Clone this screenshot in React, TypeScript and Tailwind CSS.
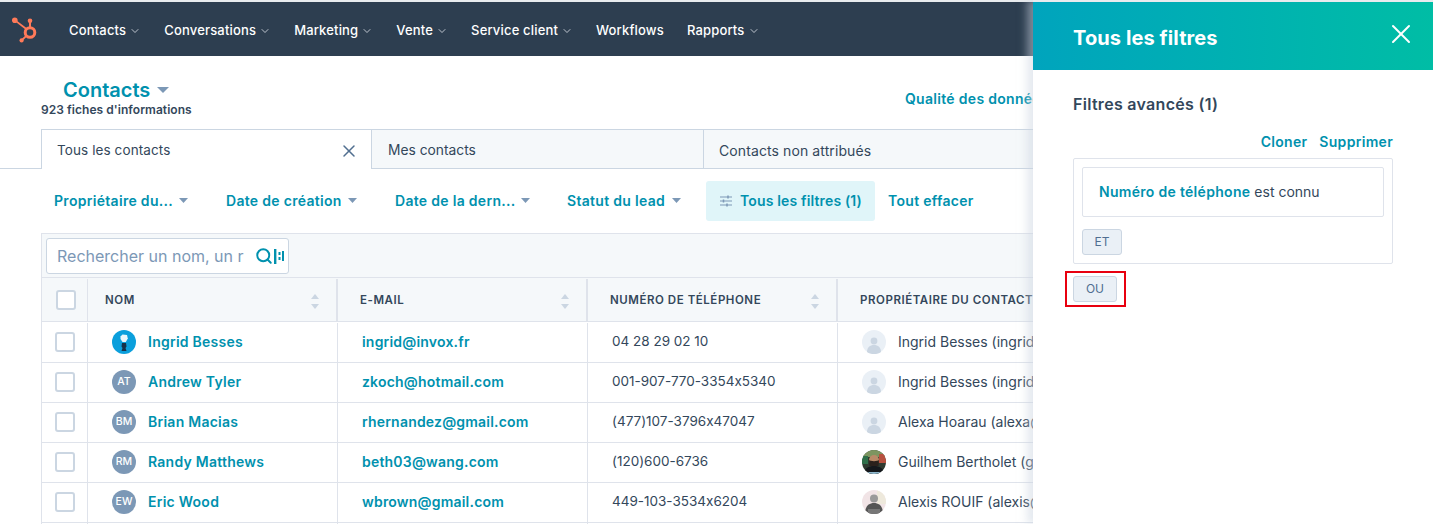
import { ChevronDown, Search, X } from 'lucide-react';

const navItems = [
  { label: 'Contacts', menu: true },
  { label: 'Conversations', menu: true },
  { label: 'Marketing', menu: true },
  { label: 'Vente', menu: true },
  { label: 'Service client', menu: true },
  { label: 'Workflows', menu: false },
  { label: 'Rapports', menu: true },
];

const filters = [
  { label: 'Propriétaire du...', width: 'w-[172px]', gap: 'gap-[6px]' },
  { label: 'Date de création', width: 'w-[169px]', gap: 'gap-[6px]' },
  { label: 'Date de la dern...', width: 'w-[172px]', gap: 'gap-[5px]' },
  { label: 'Statut du lead', width: 'w-[139px]', gap: 'gap-[7px]' },
];

type Owner = 'blank' | 'guilhem' | 'alexis';

const rows: {
  initials: string;
  name: string;
  email: string;
  phone: string;
  owner: string;
  ownerAvatar: Owner;
}[] = [
  { initials: '', name: 'Ingrid Besses', email: 'ingrid@invox.fr', phone: '04 28 29 02 10', owner: 'Ingrid Besses (ingrid@invox.fr)', ownerAvatar: 'blank' },
  { initials: 'AT', name: 'Andrew Tyler', email: 'zkoch@hotmail.com', phone: '001-907-770-3354x5340', owner: 'Ingrid Besses (ingrid@invox.fr)', ownerAvatar: 'blank' },
  { initials: 'BM', name: 'Brian Macias', email: 'rhernandez@gmail.com', phone: '(477)107-3796x47047', owner: 'Alexa Hoarau (alexa@invox.fr)', ownerAvatar: 'blank' },
  { initials: 'RM', name: 'Randy Matthews', email: 'beth03@wang.com', phone: '(120)600-6736', owner: 'Guilhem Bertholet (guilhem@invox.fr)', ownerAvatar: 'guilhem' },
  { initials: 'EW', name: 'Eric Wood', email: 'wbrown@gmail.com', phone: '449-103-3534x6204', owner: 'Alexis ROUIF (alexis@invox.fr)', ownerAvatar: 'alexis' },
];

function Logo() {
  return (
    <svg width="28" height="30" viewBox="0 0 28 30" fill="none" className="shrink-0">
      <circle cx="18" cy="18.5" r="4.8" stroke="#ff7a59" strokeWidth="3" />
      <circle cx="18" cy="6.8" r="2.3" fill="#ff7a59" />
      <path d="M18 7v7" stroke="#ff7a59" strokeWidth="2" />
      <circle cx="2.8" cy="6.2" r="2.8" fill="#ff7a59" />
      <path d="M3 6.4l11 8.4" stroke="#ff7a59" strokeWidth="1.8" />
      <circle cx="9.6" cy="26.4" r="2.1" fill="#ff7a59" />
      <path d="M10 26l4.6-4.4" stroke="#ff7a59" strokeWidth="1.8" />
    </svg>
  );
}

function Caret() {
  return (
    <svg width="9" height="5" viewBox="0 0 9 5" className="shrink-0">
      <path d="M0 0h9L4.5 5z" fill="#7c98b6" />
    </svg>
  );
}

function SortArrows() {
  return (
    <svg width="8" height="15" viewBox="0 0 8 15" className="shrink-0">
      <path d="M4 0l4 5H0z" fill="#cbd6e2" />
      <path d="M4 15l4-5H0z" fill="#cbd6e2" />
    </svg>
  );
}

function BlankAvatar() {
  return (
    <svg width="24" height="24" viewBox="0 0 24 24" className="shrink-0">
      <circle cx="12" cy="12" r="12" fill="#eaf0f6" />
      <circle cx="12" cy="11" r="3.4" fill="#cbd6e2" />
      <path d="M5 22c0-4.5 3-7 7-7s7 2.5 7 7c-2 1.400-4.500 2-7 2s-5-.6-7-2z" fill="#cbd6e2" />
    </svg>
  );
}

function GuilhemAvatar() {
  return (
    <svg width="24" height="24" viewBox="0 0 24 24" className="shrink-0">
      <clipPath id="guilhem">
        <circle cx="12" cy="12" r="12" />
      </clipPath>
      <g clipPath="url(#guilhem)">
        <rect width="24" height="24" fill="#2f3a30" />
        <rect width="24" height="7" fill="#7d9560" />
        <rect x="17" y="4" width="7" height="9" fill="#b8503f" />
        <rect x="0" y="6" width="6" height="8" fill="#2f6f4a" />
        <circle cx="12" cy="10" r="5" fill="#b98a68" />
        <path d="M7 10c1 1.500 9 1.500 10 0l-.5 6h-9z" fill="#2b211c" />
        <path d="M2 24c0-6 5-8 10-8s10 2 10 8z" fill="#15181c" />
        <rect y="22" width="24" height="2" fill="#8fb7cc" />
      </g>
    </svg>
  );
}

function AlexisAvatar() {
  return (
    <svg width="24" height="24" viewBox="0 0 24 24" className="shrink-0">
      <clipPath id="alexis">
        <circle cx="12" cy="12" r="12" />
      </clipPath>
      <g clipPath="url(#alexis)">
        <rect width="24" height="24" fill="#f1e4e6" />
        <rect x="15" width="9" height="14" fill="#eee9dc" />
        <circle cx="12" cy="8.500" r="4" fill="#9a9a9a" />
        <path d="M3 24c0-8 4-11 9-11s9 3 9 11z" fill="#555555" />
        <rect x="6" y="19" width="12" height="5" fill="#777777" />
      </g>
    </svg>
  );
}

function InvoxAvatar() {
  return (
    <svg width="24" height="24" viewBox="0 0 24 24" className="shrink-0">
      <circle cx="12" cy="12" r="12" fill="#0b9fdc" />
      <path d="M8.500 6.500l2-2 4.500.5.800 3.500-2 3.500h-3.300L8.500 9z" fill="#eaf6fb" />
      <path d="M10 13h4l.5 3.500-1 1.500 1 3h-5l1-3-1-1.500z" fill="#17324a" />
    </svg>
  );
}

function OwnerAvatar({ kind }: { kind: Owner }) {
  if (kind === 'guilhem') return <GuilhemAvatar />;
  if (kind === 'alexis') return <AlexisAvatar />;
  return <BlankAvatar />;
}

function HeaderCell({ label, width, pad }: { label: string; width: string; pad: string }) {
  return (
    <div className={`${width} ${pad} shrink-0 flex items-center justify-between pr-[17px] pt-[2px] border-r-2 border-[#dfe3eb] text-[11.5px] font-semibold tracking-[0.55px] text-[#33475b] whitespace-nowrap`}>
      <span>{label}</span>
      <SortArrows />
    </div>
  );
}

export default function App() {
  return (
    <div className="relative w-[1433px] h-[524px] overflow-hidden bg-white font-['Inter',sans-serif] text-[#33475b] [font-feature-settings:'calt'_0]">
      <div className="h-[2px] bg-[#e8ebee]" />

      <nav className="h-[54px] bg-[#2d3e50] flex items-center pl-[12px]">
        <Logo />
        <div className="flex items-center gap-[23px] ml-[29px] pt-[3px]">
          {navItems.map((item) => (
            <div key={item.label} className="flex items-center gap-[3px] text-[13px] font-medium tracking-[0.17px] text-white">
              <span>{item.label}</span>
              {item.menu && <ChevronDown size={12} strokeWidth={1.6} className="text-[#dfe3eb]" />}
            </div>
          ))}
        </div>
      </nav>

      <div className="h-[73px] flex justify-between pl-[41px]">
        <div className="pt-[21px]">
          <div className="flex items-center gap-[7px] pl-[22px] h-[26px]">
            <span className="text-[20px] leading-[26px] font-semibold text-[#0091ae]">Contacts</span>
            <svg width="12" height="6" viewBox="0 0 12 6"><path d="M0 0h12L6 6z" fill="#7c98b6" /></svg>
          </div>
          <div className="text-[12px] leading-[16px] font-semibold tracking-[0.05px] mt-[-1px]">923 fiches d'informations</div>
        </div>
        <div className="pt-[34px] w-[528px] overflow-hidden whitespace-nowrap text-[14px] leading-[18px] font-semibold tracking-[0.3px] text-[#0091ae]">
          Qualité des données
        </div>
      </div>

      <div className="flex h-[40px] pl-[41px] border-b border-[#cbd6e2]">
        <div className="w-[331px] h-[40px] bg-white border-x border-t border-[#cbd6e2] flex items-center justify-between pl-[15px] pr-[12px] pt-[2px] text-[13.5px] tracking-[0.1px]">
          <span>Tous les contacts</span>
          <X size={20} strokeWidth={1.8} className="text-[#516f90]" />
        </div>
        <div className="w-[332px] bg-[#f5f8fa] border-r border-t border-[#cbd6e2] flex items-center pl-[16px] pt-[2px] text-[13.8px]">Mes contacts</div>
        <div className="flex-1 bg-[#f5f8fa] border-t border-[#cbd6e2] flex items-center pl-[15px] pt-[2px] text-[14px] tracking-[0.1px]">Contacts non attribués</div>
      </div>

      <div className="h-[40px] mt-[12px] flex items-center pl-[54px] text-[14px] font-semibold tracking-[0.3px] text-[#0091ae] whitespace-nowrap">
        {filters.map((f) => (
          <div key={f.label} className={`${f.width} flex items-center ${f.gap} pb-[1px]`}>
            <span>{f.label}</span>
            <Caret />
          </div>
        ))}
        <div className="h-[40px] w-[169px] rounded-[3px] bg-[#e0f5f9] flex items-center gap-[8px] pl-[14px] pb-[1px]">
          <svg width="12" height="12" viewBox="0 0 12 12" fill="none" stroke="#7c98b6" strokeWidth="1.100">
            <path d="M0 2h12M0 6h12M0 10h12" />
            <path d="M8 .5v3M3.500 4.500v3M7 8.500v3" strokeWidth="1.500" />
          </svg>
          <span className="tracking-[0.15px]">Tous les filtres (1)</span>
        </div>
        <span className="ml-[13px] pb-[1px]">Tout effacer</span>
      </div>

      <div className="mt-[12px] ml-[41px] border-l border-t border-[#dfe3eb]">
        <div className="h-[44px] bg-[#f5f8fa] border-b border-[#dfe3eb] pt-[4px] pl-[4px]">
          <div className="w-[243px] h-[36px] bg-white border border-[#cbd6e2] rounded-[3px] flex items-center justify-between pl-[10px] pr-[4px]">
            <span className="text-[16px] text-[#7c98b6] whitespace-nowrap">Rechercher un nom, un r</span>
            <div className="flex items-center gap-[1px] text-[#0091ae]">
              <Search size={18} strokeWidth={2.6} />
              <svg width="10" height="15" viewBox="0 0 10 15" fill="#0091ae">
                <rect x="0" y="0" width="2.400" height="15" />
                <rect x="4.500" y="3" width="2" height="3" />
                <rect x="4.500" y="8" width="2" height="3" />
                <rect x="8" y="2" width="2" height="10" />
              </svg>
            </div>
          </div>
        </div>

        <div className="h-[44px] flex bg-[#f5f8fa] border-b border-[#dfe3eb] pt-[1px]">
          <div className="w-[46px] shrink-0 flex items-center justify-center border-r border-[#dfe3eb] pl-[2px]">
            <div className="w-[20px] h-[20px] rounded-[3px] bg-white border-2 border-[#cbd6e2]" />
          </div>
          <HeaderCell label="NOM" width="w-[250px]" pad="pl-[17px]" />
          <HeaderCell label="E-MAIL" width="w-[250px]" pad="pl-[22px]" />
          <HeaderCell label="NUMÉRO DE TÉLÉPHONE" width="w-[250px]" pad="pl-[22px]" />
          <div className="flex-1 flex items-center pl-[22px] pt-[2px] text-[11.5px] font-semibold tracking-[0.55px] whitespace-nowrap">PROPRIÉTAIRE DU CONTACT</div>
        </div>

        <div className="pt-[1px]">
          {rows.map((row) => (
            <div key={row.name} className="h-[40px] flex border-b border-[#dfe3eb] text-[13.5px]">
              <div className="w-[46px] shrink-0 flex items-center justify-center border-r border-[#dfe3eb] pb-[2px]">
                <div className="w-[20px] h-[20px] rounded-[3px] bg-white border-2 border-[#cbd6e2]" />
              </div>
              <div className="w-[250px] shrink-0 flex items-center gap-[12px] pl-[24px] border-r border-[#dfe3eb] pb-[2px]">
                {row.initials ? (
                  <div className="w-[24px] h-[24px] rounded-full bg-[#7c98b6] flex items-center justify-center text-[10.5px] font-medium text-white shrink-0">{row.initials}</div>
                ) : (
                  <InvoxAvatar />
                )}
                <span className="text-[14px] font-semibold tracking-[0.25px] text-[#0091ae]">{row.name}</span>
              </div>
              <div className="w-[250px] shrink-0 flex items-center pl-[24px] border-r border-[#dfe3eb] text-[14px] font-semibold tracking-[0.2px] text-[#0091ae] pb-[2px]">{row.email}</div>
              <div className="w-[250px] shrink-0 flex items-center pl-[24px] border-r border-[#dfe3eb] pb-[2px]">{row.phone}</div>
              <div className="flex-1 flex items-center gap-[12px] pl-[24px] whitespace-nowrap text-[14px] pb-[2px]">
                <OwnerAvatar kind={row.ownerAvatar} />
                <span>{row.owner}</span>
              </div>
            </div>
          ))}
        </div>
        <div className="h-[40px] flex">
          <div className="w-[46px] border-r border-[#dfe3eb]" />
          <div className="w-[250px] border-r border-[#dfe3eb]" />
          <div className="w-[250px] border-r border-[#dfe3eb]" />
          <div className="w-[250px] border-r border-[#dfe3eb]" />
        </div>
      </div>

      <aside className="absolute top-0 right-0 bottom-0 w-[400px] bg-white shadow-[-6px_0_8px_rgba(203,214,226,0.5)]">
        <div className="h-[2px] bg-[#e8ebee]" />
        <div className="h-[68px] bg-gradient-to-r from-[#00a4bd] to-[#00bda5] flex items-center justify-between pl-[40px] pr-[16px]">
          <h1 className="text-[20px] font-bold tracking-[0.1px] text-white mt-[3px]">Tous les filtres</h1>
          <X size={32} strokeWidth={1.5} className="text-white -mt-[4px]" />
        </div>
        <div className="pt-[24px] px-[40px]">
          <h2 className="text-[16px] leading-[20px] font-semibold tracking-[0.3px]">Filtres avancés (1)</h2>
          <div className="flex justify-end gap-[12px] mt-[18px] text-[14px] leading-[20px] font-semibold tracking-[0.3px] text-[#0091ae]">
            <span>Cloner</span>
            <span>Supprimer</span>
          </div>
          <div className="mt-[6px] h-[106px] border border-[#dfe3eb] rounded-[2px] p-[8px]">
            <div className="h-[50px] border border-[#dfe3eb] rounded-[2px] flex items-center pl-[16px] pb-[2px] text-[14px]">
              <span className="font-semibold tracking-[0.3px] text-[#0091ae]">Numéro de téléphone</span>
              <span className="ml-[4px]">est connu</span>
            </div>
            <div className="mt-[12px] w-[40px] h-[26px] bg-[#eaf0f6] border border-[#cbd6e2] rounded-[3px] flex items-center justify-center text-[12px] text-[#506e91]">ET</div>
          </div>
          <div className="relative mt-[12px] w-[44px] h-[26px] bg-[#eaf0f6] border border-[#cbd6e2] rounded-[3px] flex items-center justify-center text-[12px] text-[#506e91]">
            OU
            <div className="absolute -left-[9px] -top-[6px] w-[61px] h-[36px] border-2 border-[#e8000f]" />
          </div>
        </div>
      </aside>
    </div>
  );
}
